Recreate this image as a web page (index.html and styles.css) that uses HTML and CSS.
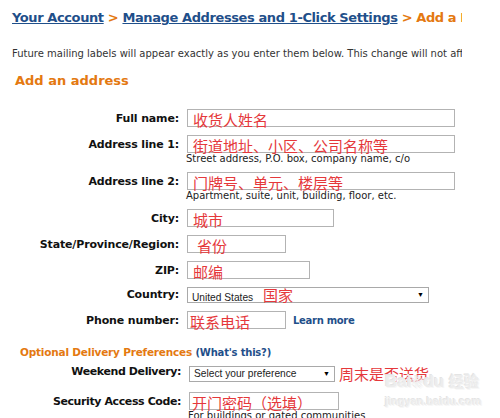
FILE: index.html
```html
<!DOCTYPE html>
<html lang="en">
<head>
    <meta charset="UTF-8">
    <title>Add a New Address</title>
    <link rel="stylesheet" href="styles.css">
</head>
<body>
    <div class="page">
        <!-- breadcrumb -->
        <div class="crumbs">
            <a href="#">Your Account</a>
            <span class="sep">&gt;</span>
            <a href="#">Manage Addresses and 1-Click Settings</a>
            <span class="current">&gt; Add a New Address</span>
        </div>

        <p class="intro">Future mailing labels will appear exactly as you enter them below. This change will not affect orders already placed.</p>

        <h2 class="section-title">Add an address</h2>

        <div class="form">
            <label class="label">Full name:</label>
            <div class="field">
                <div class="box w-long"><span class="note">收货人姓名</span></div>
            </div>

            <label class="label">Address line 1:</label>
            <div class="field">
                <div class="box w-long"><span class="note">街道地址、小区、公司名称等</span></div>
                <div class="hint">Street address, P.O. box, company name, c/o</div>
            </div>

            <label class="label">Address line 2:</label>
            <div class="field">
                <div class="box w-long"><span class="note">门牌号、单元、楼层等</span></div>
                <div class="hint">Apartment, suite, unit, building, floor, etc.</div>
            </div>

            <label class="label">City:</label>
            <div class="field">
                <div class="box w-city"><span class="note">城市</span></div>
            </div>

            <label class="label">State/Province/Region:</label>
            <div class="field">
                <div class="box w-state"><span class="note indent">省份</span></div>
            </div>

            <label class="label">ZIP:</label>
            <div class="field">
                <div class="box w-zip"><span class="note">邮编</span></div>
            </div>

            <label class="label label-select">Country:</label>
            <div class="field">
                <div class="select w-country">
                    <span class="select-text">United States</span>
                    <span class="note inline">国家</span>
                    <span class="arrow">&#9660;</span>
                </div>
            </div>

            <label class="label">Phone number:</label>
            <div class="field field-row">
                <div class="box w-phone"><span class="note tight">联系电话</span></div>
                <a href="#" class="learn">Learn more</a>
            </div>
        </div>

        <div class="optional-title">
            Optional Delivery Preferences <span class="paren">(<a href="#">What's this?</a>)</span>
        </div>

        <div class="form form-optional">
            <label class="label label-select">Weekend Delivery:</label>
            <div class="field field-row">
                <div class="select w-weekend">
                    <span class="select-text">Select your preference</span>
                    <span class="arrow">&#9660;</span>
                </div>
                <span class="note after">周末是否送货</span>
            </div>

            <label class="label">Security Access Code:</label>
            <div class="field">
                <div class="box w-code"><span class="note tight">开门密码（选填）</span></div>
                <div class="hint">For buildings or gated communities</div>
            </div>
        </div>
    </div>

    <!-- 百度經驗水印 -->
    <div class="watermark">
        <div class="wm-logo">Bai<span class="wm-paw">&#10048;</span>du <span class="wm-cn">经验</span></div>
        <div class="wm-url">jingyan.baidu.com</div>
    </div>
</body>
</html>
```

FILE: styles.css
```css
body {
    margin: 0;
    background: #fff;
    font-family: "DejaVu Sans", Verdana, "Noto Sans CJK SC", sans-serif;
    color: #000;
    position: relative;
    height: 418px;
    overflow: hidden;
}

.page {
    width: 462px;
    overflow: hidden;
}

a {
    color: #1f4f8a;
}

/* 麵包屑 */
.crumbs {
    padding: 10px 0 0 12px;
    font-size: 13px;
    letter-spacing: -0.4px;
    font-weight: bold;
    white-space: nowrap;
    color: #e47911;
}

.crumbs a {
    text-decoration: underline;
}

.intro {
    margin: 23px 0 0 12px;
    font-size: 10px;
    color: #333;
    white-space: nowrap;
}

.section-title {
    margin: 14px 0 0 15px;
    font-size: 13px;
    color: #e47911;
}

/* 表單 */
.form {
    display: grid;
    grid-template-columns: 179px auto;
    column-gap: 8px;
    row-gap: 8px;
    margin-top: 21px;
    align-items: start;
}

.label {
    text-align: right;
    font-size: 11px;
    letter-spacing: -0.15px;
    font-weight: bold;
    line-height: 17px;
    padding-top: 1px;
    color: #111;
}

.label-select {
    line-height: 16px;
    padding-top: 0;
}

.field-row {
    display: flex;
    align-items: center;
    gap: 7px;
}

.box {
    height: 16px;
    border: 1px solid #b3b3b3;
    box-sizing: content-box;
}

.w-long { width: 266px; }
.w-city { width: 145px; }
.w-state { width: 97px; }
.w-zip { width: 121px; }
.w-phone { width: 97px; }
.w-code { width: 148px; }

.note {
    display: block;
    padding-left: 5px;
    font-family: "Noto Sans CJK SC", sans-serif;
    font-size: 15px;
    line-height: 20px;
    color: #e5383b;
    white-space: nowrap;
}

.note.indent { padding-left: 9px; }
.note.tight { padding-left: 2px; }

.note.inline {
    display: inline;
    padding-left: 7px;
    line-height: 14px;
}

.note.after {
    padding-left: 0;
    margin-left: -3px;
}

.hint {
    font-size: 10px;
    line-height: 11px;
    color: #222;
    margin-left: -1px;
}

.select {
    position: relative;
    height: 14px;
    border: 1px solid #a9a9a9;
    box-sizing: content-box;
    font-family: "Liberation Sans", Arial, sans-serif;
    font-size: 10.2px;
    line-height: 14px;
    color: #222;
    padding-left: 4px;
    white-space: nowrap;
}

.w-country { width: 236px; }
.w-weekend { width: 140px; }

.arrow {
    position: absolute;
    right: 4px;
    top: 0;
    font-size: 7px;
    color: #000;
}

.learn {
    font-size: 10px;
    letter-spacing: -0.3px;
    font-weight: bold;
    text-decoration: none;
}

.optional-title {
    margin: 17px 0 0 20px;
    font-size: 10.5px;
    letter-spacing: -0.2px;
    font-weight: bold;
    color: #e47911;
}

.optional-title .paren {
    color: #1f4f8a;
    font-size: 10px;
}

.optional-title a {
    text-decoration: none;
}

.form-optional {
    grid-template-columns: 181px auto;
    margin-top: 6px;
}

.form-optional .label {
    letter-spacing: -0.4px;
}

/* 百度經驗水印 */
.watermark {
    position: absolute;
    left: 385px;
    top: 370px;
    color: #ededed;
    text-shadow: 1px 1px 0 #f7f7f7, -1px -1px 0 #e4e4e4;
    font-family: "Liberation Sans", Arial, "Noto Sans CJK SC", sans-serif;
    font-weight: bold;
}

.wm-logo {
    font-size: 17px;
    line-height: 24px;
    white-space: nowrap;
}

.wm-paw {
    font-size: 12px;
}

.wm-cn {
    font-size: 15px;
}

.wm-url {
    font-size: 11px;
    line-height: 13px;
}
```
